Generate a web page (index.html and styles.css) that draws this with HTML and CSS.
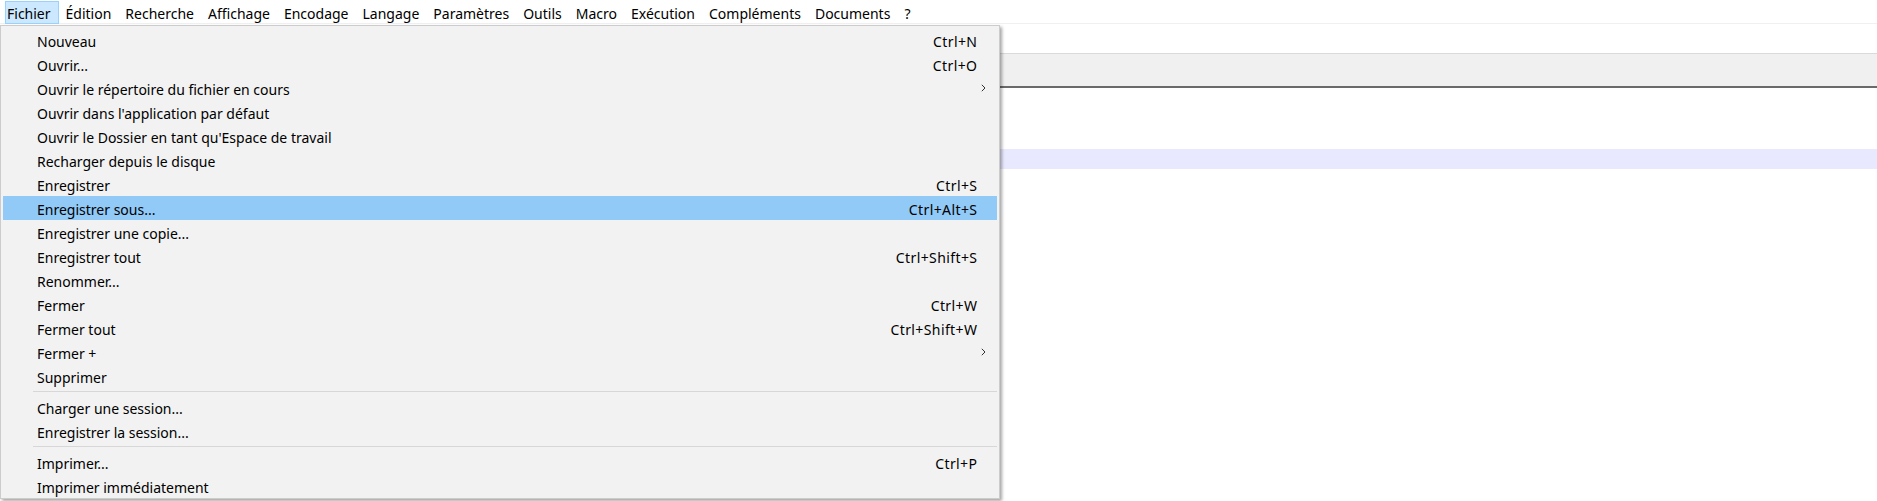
FILE: index.html
```html
<!DOCTYPE html>
<html lang="fr">
<head>
<meta charset="utf-8">
<title>Notepad++</title>
<link rel="stylesheet" href="styles.css">
</head>
<body>
<div class="app">
  <nav class="menubar">
    <span class="mb-item active">Fichier</span>
    <span class="mb-item">Édition</span>
    <span class="mb-item">Recherche</span>
    <span class="mb-item">Affichage</span>
    <span class="mb-item">Encodage</span>
    <span class="mb-item">Langage</span>
    <span class="mb-item">Paramètres</span>
    <span class="mb-item">Outils</span>
    <span class="mb-item">Macro</span>
    <span class="mb-item">Exécution</span>
    <span class="mb-item">Compléments</span>
    <span class="mb-item">Documents</span>
    <span class="mb-item">?</span>
  </nav>
  <div class="toolbar"></div>
  <div class="tabbar"></div>
  <div class="editor">
    <div class="line"></div>
    <div class="line"></div>
    <div class="line"></div>
    <div class="line current"></div>
  </div>

  <div class="dropdown">
    <div class="row"><span class="label">Nouveau</span><span class="key">Ctrl+N</span><span class="sub"></span></div>
    <div class="row"><span class="label">Ouvrir...</span><span class="key">Ctrl+O</span><span class="sub"></span></div>
    <div class="row"><span class="label">Ouvrir le répertoire du fichier en cours</span><span class="key"></span><span class="sub"><svg class="chev" width="5" height="8" viewBox="0 0 5 8"><path d="M0.8 0.8 L4 4 L0.8 7.2" fill="none" stroke="#333" stroke-width="1"/></svg></span></div>
    <div class="row"><span class="label">Ouvrir dans l'application par défaut</span><span class="key"></span><span class="sub"></span></div>
    <div class="row"><span class="label">Ouvrir le Dossier en tant qu'Espace de travail</span><span class="key"></span><span class="sub"></span></div>
    <div class="row"><span class="label">Recharger depuis le disque</span><span class="key"></span><span class="sub"></span></div>
    <div class="row"><span class="label">Enregistrer</span><span class="key">Ctrl+S</span><span class="sub"></span></div>
    <div class="row hover"><span class="label">Enregistrer sous...</span><span class="key">Ctrl+Alt+S</span><span class="sub"></span></div>
    <div class="row"><span class="label">Enregistrer une copie...</span><span class="key"></span><span class="sub"></span></div>
    <div class="row"><span class="label">Enregistrer tout</span><span class="key">Ctrl+Shift+S</span><span class="sub"></span></div>
    <div class="row"><span class="label">Renommer...</span><span class="key"></span><span class="sub"></span></div>
    <div class="row"><span class="label">Fermer</span><span class="key">Ctrl+W</span><span class="sub"></span></div>
    <div class="row"><span class="label">Fermer tout</span><span class="key">Ctrl+Shift+W</span><span class="sub"></span></div>
    <div class="row"><span class="label">Fermer +</span><span class="key"></span><span class="sub"><svg class="chev" width="5" height="8" viewBox="0 0 5 8"><path d="M0.8 0.8 L4 4 L0.8 7.2" fill="none" stroke="#333" stroke-width="1"/></svg></span></div>
    <div class="row"><span class="label">Supprimer</span><span class="key"></span><span class="sub"></span></div>
    <div class="sep"></div>
    <div class="row"><span class="label">Charger une session...</span><span class="key"></span><span class="sub"></span></div>
    <div class="row"><span class="label">Enregistrer la session...</span><span class="key"></span><span class="sub"></span></div>
    <div class="sep"></div>
    <div class="row"><span class="label">Imprimer...</span><span class="key">Ctrl+P</span><span class="sub"></span></div>
    <div class="row"><span class="label">Imprimer immédiatement</span><span class="key"></span><span class="sub"></span></div>
  </div>
</div>
</body>
</html>
```

FILE: styles.css
```css
html, body {
  margin: 0;
  padding: 0;
  background: #ffffff;
  overflow: hidden;
}

body {
  font-family: "Noto Sans", "Open Sans", sans-serif;
  font-size: 14px;
  color: #000;
}

.app {
  position: relative;
  width: 1877px;
  height: 501px;
  overflow: hidden;
}

.menubar {
  display: flex;
  height: 24px;
  padding-top: 1px;
  box-sizing: border-box;
  border-bottom: 1px solid #f0f0f0;
  background: #fff;
}

.mb-item {
  display: flex;
  align-items: center;
  padding: 2px 7px 0;
  height: 23px;
  box-sizing: border-box;
  border: 1px solid transparent;
  border-width: 1px 0;
  white-space: nowrap;
}

.mb-item.active {
  margin-left: 5px;
  padding: 2px 7px 0 1px;
  border: 1px solid #99d1ff;
  background: #cce8ff;
}

.toolbar {
  height: 29px;
  background: #fff;
}

.tabbar {
  height: 32px;
  background: #f0f0f0;
  border-top: 1px solid #dadada;
  border-bottom: 2px solid #6a6a6a;
}

.editor {
  padding-top: 1px;
}

.line {
  height: 20px;
}

.line.current {
  background: #e8e8ff;
}

.dropdown {
  position: absolute;
  top: 25px;
  left: 0;
  width: 1000px;
  box-sizing: border-box;
  padding: 2px 2px 0;
  background: #f2f2f2;
  border: 1px solid #cccccc;
  box-shadow: 2px 2px 3px rgba(0, 0, 0, 0.35);
}

.row {
  display: grid;
  grid-template-columns: 1fr auto 20px;
  align-items: center;
  height: 24px;
  box-sizing: border-box;
  padding-top: 2px;
  padding-left: 34px;
  white-space: nowrap;
}

.row.hover {
  background: #91c9f7;
}

.key {
  text-align: right;
  letter-spacing: 0.4px;
  margin-right: -0.4px;
}

.sub {
  display: flex;
  align-items: center;
  padding-left: 4px;
  margin-top: -2px;
}

.sep {
  height: 7px;
  position: relative;
}

.sep::after {
  content: "";
  position: absolute;
  left: 30px;
  right: 0;
  top: 3px;
  height: 1px;
  background: #d7d7d7;
}
```
